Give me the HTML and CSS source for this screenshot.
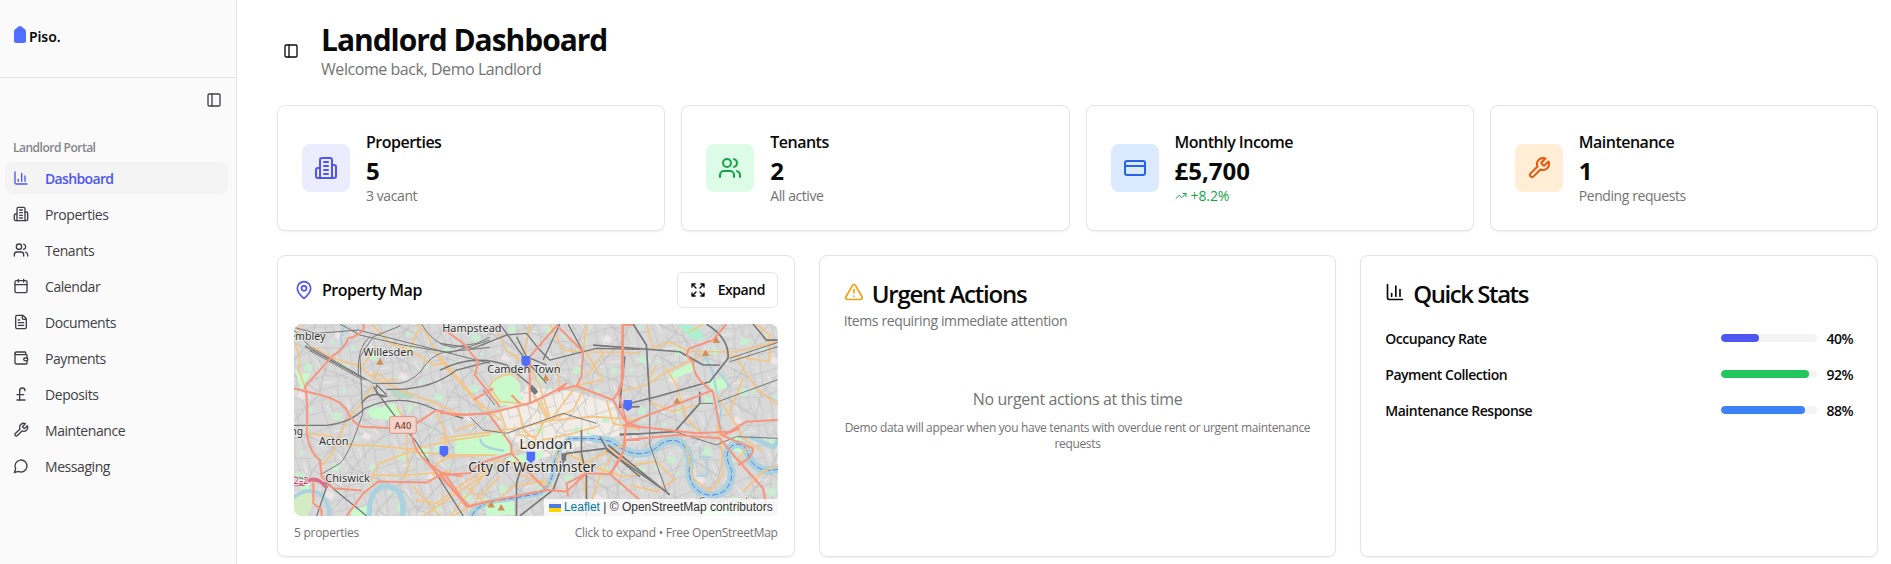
FILE: index.html
```html
<!DOCTYPE html>
<html lang="en">
<head>
<meta charset="utf-8">
<title>Landlord Dashboard</title>
<link rel="stylesheet" href="styles.css">
</head>
<body>
<svg class="sprite" aria-hidden="true">
  <symbol id="panel" viewBox="0 0 24 24"><rect width="18" height="18" x="3" y="3" rx="2"/><path d="M9 3v18"/></symbol>
  <symbol id="chart" viewBox="0 0 24 24"><path d="M3 3v16a2 2 0 0 0 2 2h16"/><path d="M18 17V9"/><path d="M13 17V5"/><path d="M8 17v-3"/></symbol>
  <symbol id="building" viewBox="0 0 24 24"><path d="M6 22V4a2 2 0 0 1 2-2h8a2 2 0 0 1 2 2v18Z"/><path d="M6 12H4a2 2 0 0 0-2 2v6a2 2 0 0 0 2 2h2"/><path d="M18 9h2a2 2 0 0 1 2 2v9a2 2 0 0 1-2 2h-2"/><path d="M10 6h4M10 10h4M10 14h4M10 18h4"/></symbol>
  <symbol id="users" viewBox="0 0 24 24"><path d="M16 21v-2a4 4 0 0 0-4-4H6a4 4 0 0 0-4 4v2"/><circle cx="9" cy="7" r="4"/><path d="M22 21v-2a4 4 0 0 0-3-3.87"/><path d="M16 3.13a4 4 0 0 1 0 7.75"/></symbol>
  <symbol id="calendar" viewBox="0 0 24 24"><path d="M8 2v4M16 2v4"/><rect width="18" height="18" x="3" y="4" rx="2"/><path d="M3 10h18"/></symbol>
  <symbol id="file" viewBox="0 0 24 24"><path d="M15 2H6a2 2 0 0 0-2 2v16a2 2 0 0 0 2 2h12a2 2 0 0 0 2-2V7Z"/><path d="M14 2v4a2 2 0 0 0 2 2h4"/><path d="M10 9H8M16 13H8M16 17H8"/></symbol>
  <symbol id="wallet" viewBox="0 0 24 24"><path d="M19 7V4a1 1 0 0 0-1-1H5a2 2 0 0 0 0 4h15a1 1 0 0 1 1 1v4h-3a2 2 0 0 0 0 4h3a1 1 0 0 0 1-1v-2a1 1 0 0 0-1-1"/><path d="M3 5v14a2 2 0 0 0 2 2h15a1 1 0 0 0 1-1v-4"/></symbol>
  <symbol id="pound" viewBox="0 0 24 24"><path d="M18 7c0-5.333-8-5.333-8 0"/><path d="M10 7v14"/><path d="M6 21h12"/><path d="M6 13h10"/></symbol>
  <symbol id="wrench" viewBox="0 0 24 24"><path d="M14.7 6.3a1 1 0 0 0 0 1.4l1.6 1.6a1 1 0 0 0 1.4 0l3.77-3.77a6 6 0 0 1-7.94 7.94l-6.91 6.91a2.12 2.12 0 0 1-3-3l6.91-6.91a6 6 0 0 1 7.94-7.94l-3.76 3.76z"/></symbol>
  <symbol id="message" viewBox="0 0 24 24"><path d="M7.9 20A9 9 0 1 0 4 16.1L2 22Z"/></symbol>
  <symbol id="card" viewBox="0 0 24 24"><rect width="20" height="14" x="2" y="5" rx="2"/><path d="M2 10h20"/></symbol>
  <symbol id="trend" viewBox="0 0 24 24"><path d="M22 7l-8.5 8.5-5-5L2 17"/><path d="M16 7h6v6"/></symbol>
  <symbol id="pin" viewBox="0 0 24 24"><path d="M20 10c0 4.993-5.539 10.193-7.399 11.799a1 1 0 0 1-1.202 0C9.539 20.193 4 14.993 4 10a8 8 0 0 1 16 0"/><circle cx="12" cy="10" r="3"/></symbol>
  <symbol id="expand" viewBox="0 0 24 24"><path d="m15 15 6 6M15 9l6-6M21 16.2V21h-4.8M21 7.8V3h-4.8M3 16.2V21h4.8M3 21l6-6M3 7.8V3h4.8M9 9 3 3"/></symbol>
  <symbol id="alert" viewBox="0 0 24 24"><path d="m21.73 18-8-14a2 2 0 0 0-3.48 0l-8 14A2 2 0 0 0 4 21h16a2 2 0 0 0 1.73-3"/><path d="M12 9v4M12 17h.01"/></symbol>
</svg>

<div class="app">
  <aside class="sidebar">
    <div class="brand">
      <svg class="brand-mark" viewBox="0 0 12 17"><path d="M0 5.6Q0 4.4.9 3.6L4.6.6Q6-.4 7.4.6L11.1 3.6Q12 4.4 12 5.6V14.5Q12 17 9.5 17H2.5Q0 17 0 14.5Z"/></svg>
      <span class="brand-name">Piso.</span>
    </div>
    <div class="collapse"><svg class="icon"><use href="#panel"/></svg></div>
    <div class="group-label">Landlord Portal</div>
    <nav class="nav">
      <a class="nav-item active"><svg class="icon"><use href="#chart"/></svg><span>Dashboard</span></a>
      <a class="nav-item"><svg class="icon"><use href="#building"/></svg><span>Properties</span></a>
      <a class="nav-item"><svg class="icon"><use href="#users"/></svg><span>Tenants</span></a>
      <a class="nav-item"><svg class="icon"><use href="#calendar"/></svg><span>Calendar</span></a>
      <a class="nav-item"><svg class="icon"><use href="#file"/></svg><span>Documents</span></a>
      <a class="nav-item"><svg class="icon"><use href="#wallet"/></svg><span>Payments</span></a>
      <a class="nav-item"><svg class="icon"><use href="#pound"/></svg><span>Deposits</span></a>
      <a class="nav-item"><svg class="icon"><use href="#wrench"/></svg><span>Maintenance</span></a>
      <a class="nav-item"><svg class="icon"><use href="#message"/></svg><span>Messaging</span></a>
    </nav>
  </aside>

  <main class="main">
    <header class="page-head">
      <svg class="icon"><use href="#panel"/></svg>
      <div>
        <h1 class="page-title">Landlord Dashboard</h1>
        <p class="page-sub">Welcome back, Demo Landlord</p>
      </div>
    </header>

    <section class="stats">
      <article class="card stat">
        <div class="tile indigo"><svg class="icon lg"><use href="#building"/></svg></div>
        <div><div class="stat-label">Properties</div><div class="stat-value">5</div><div class="stat-note">3 vacant</div></div>
      </article>
      <article class="card stat">
        <div class="tile green"><svg class="icon lg"><use href="#users"/></svg></div>
        <div><div class="stat-label">Tenants</div><div class="stat-value">2</div><div class="stat-note">All active</div></div>
      </article>
      <article class="card stat">
        <div class="tile blue"><svg class="icon lg"><use href="#card"/></svg></div>
        <div><div class="stat-label">Monthly Income</div><div class="stat-value">£5,700</div><div class="stat-note up"><svg class="icon xs"><use href="#trend"/></svg>+8.2%</div></div>
      </article>
      <article class="card stat">
        <div class="tile orange"><svg class="icon lg"><use href="#wrench"/></svg></div>
        <div><div class="stat-label">Maintenance</div><div class="stat-value">1</div><div class="stat-note">Pending requests</div></div>
      </article>
    </section>

    <section class="panels">
      <article class="card map-card">
        <div class="map-head">
          <svg class="icon md"><use href="#pin"/></svg>
          <h2 class="map-title">Property Map</h2>
          <button class="expand"><svg class="icon"><use href="#expand"/></svg><span>Expand</span></button>
        </div>
        <div class="map">
          <svg class="map-art" viewBox="0 0 1452 576">
            <defs>
              <pattern id="streets" width="170" height="150" patternUnits="userSpaceOnUse" patternTransform="rotate(-14)">
                <path d="M0 30L50 22 90 34 170 30M0 95L60 88 120 104 170 95M25 0L30 60 22 110 25 150M85 0L90 34 76 90 85 150M140 0L132 60 144 100 140 150M30 60L85 62M110 31V70L140 66M50 90V130L84 128M0 128L24 126M144 126L170 128M105 0V32M60 0L56 24M112 104V150" fill="none" stroke="#c3c3c3" stroke-width="2.2"/>
                <path d="M8 45L20 50M40 42L76 46M66 72V84M120 50H130M98 110L100 140M152 45L164 80M36 110L44 144M126 10V26" fill="none" stroke="#ececec" stroke-width="3"/>
                <path d="M94 76h10v10h-10zM8 70h9v8h-9zM150 108h12v10h-12z" fill="#c3f2d2"/>
              </pattern>
              <pattern id="lanes" width="230" height="210" patternUnits="userSpaceOnUse" patternTransform="rotate(32)">
                <path d="M0 50L90 42 150 66 230 50M60 0L66 44 50 130 60 210M160 0L150 66 176 140 160 210M52 130L172 132" fill="none" stroke="#b6b6b6" stroke-width="2"/>
                <path d="M90 80l22-6 6 20-20 8zM190 20l18 2-4 20-14-4zM10 160l26-6 4 18-22 8z" fill="#c8f0cf"/>
                <path d="M120 160l26 2-2 16-22 2z" fill="#f0e6ea"/>
              </pattern>
            </defs>
            <rect width="1452" height="576" fill="#d9d9d9"/>
            <path d="M600 280L700 190 830 200 960 240 990 330 850 370 720 410 650 340Z" fill="#f2ede6"/>
            <rect width="1452" height="576" fill="url(#streets)"/>
            <rect width="1452" height="576" fill="url(#lanes)"/>

            <g class="park">
              <path d="M220 262L300 238 325 262 296 290 232 282Z"/>
              <path d="M590 190Q590 150 650 152L678 178V238L620 246Q596 240 590 190Z"/>
              <path d="M485 340L640 325 652 385 590 398 482 388Z"/>
              <path d="M645 400L745 380 750 398 690 418 640 412Z"/>
              <path d="M0 516Q50 490 62 530L40 576H0Z" fill="#d3ecc4"/>
              <path d="M566 525L654 520 664 570 580 576Z"/>
              <path d="M1125 150L1190 118 1208 138 1130 168Z"/>
              <path d="M0 130L18 150 50 146 22 200Z"/>
              <path d="M1240 170L1296 160 1300 190 1260 205Z"/>
              <path d="M1150 0L1210 8 1236 40 1200 50Z" fill="#adf0d0"/>
              <path d="M286 198L330 200 372 212 350 224 300 220Z" fill="#b8d8c4"/>
              <path d="M1320 330L1350 350 1342 386 1310 378Z"/>
              <path d="M1228 560L1300 540 1310 576H1230Z"/>
              <path d="M20 470L48 480 44 500 18 496ZM170 560L220 545 240 576H172ZM372 370L408 376 400 402 370 398Z"/>
            </g>

            <g class="water">
              <path d="M0 520Q40 488 78 510 104 530 106 576" stroke-width="11"/>
              <path d="M226 576Q226 488 276 486 334 490 326 576" stroke-width="16"/>
              <path d="M534 576Q556 530 640 526L740 508Q776 480 780 430 784 380 826 344L900 344" stroke-width="16"/>
              <path d="M900 344L952 352Q1010 400 1060 386 1080 380 1104 358 1150 336 1174 370 1196 400 1186 440 1190 506 1250 514 1316 510 1314 440 1284 384 1320 362 1356 352 1366 400 1390 450 1452 436" stroke-width="24"/>
              <path d="M153 0L140 40 146 70 132 86M560 346Q560 368 606 376L628 380" stroke-width="7"/>
              <path d="M1230 90L1256 140 1268 200 1282 260 1276 300 1300 330M1272 140L1310 190M1218 370V400H1250M1210 455H1240V400" stroke-width="6"/>
              <path d="M1375 340L1440 370 1452 350" stroke-width="14"/>
            </g>
            <path class="ferry" d="M534 576Q556 530 640 526L740 508Q776 480 780 430 784 380 826 344L900 344 952 352Q1010 400 1060 386 1080 380 1104 358 1150 336 1174 370 1196 400 1186 440 1190 506 1250 514 1316 510 1314 440 1284 384 1320 362 1356 352 1366 400 1390 450 1452 436"/>

            <g class="minor">
              <g transform="translate(-12 -12)">
                <path d="M12 70Q34 100 26 150L45 200M30 12L20 60M68 80L110 105 150 122 205 136 246 170 330 210 440 250 520 290"/>
                <path d="M245 12L300 70 360 90 430 135 460 130M380 12L410 40 450 120 520 200 580 270M385 30L350 110"/>
                <path d="M215 140L260 80M240 170L262 158 290 182 320 178M250 195L215 250 170 300 150 350 120 410 90 440"/>
                <path d="M320 260L350 310V390M160 376H250L370 388 480 362 600 345M50 340L130 350M245 470L265 432 360 395 490 405H600M350 390L356 440 345 478M245 466H350L480 455M240 490L250 466"/>
                <path d="M375 540L440 550 520 490 600 440M400 588L500 520 590 460M370 500L450 588M430 470L440 430 495 405M440 280L465 330 468 390M490 588L560 548M500 330L560 310"/>
              </g>
              <g transform="translate(438 -12)">
                <path d="M0 110L60 180 110 240 180 300M270 12L255 90 262 130 230 180M170 30L200 90 270 140 300 200 330 290M150 200Q160 165 230 160M150 200L180 245 250 250"/>
                <path d="M330 12L370 90 420 95 600 98M430 95L440 12M440 100L490 180 410 196 340 290M490 100L440 170M350 130L360 200 345 215"/>
                <path d="M0 355L120 340 230 325 330 302 460 290 600 300M180 270L200 330M235 260L250 330 290 360M300 240L330 300 400 270 430 210M280 225L320 290 290 350 230 345"/>
                <path d="M215 400L310 360 400 340 470 320M0 410L170 405M30 588L170 420 300 440M170 545L220 500 320 480M230 460L340 500M380 400L460 440 550 470 600 465M420 400L440 540M520 400L480 470 440 588M410 440L560 370"/>
                <path d="M110 540L180 470M80 500L150 560M350 390V450M500 240L520 310 600 330"/>
              </g>
              <g transform="translate(708 -237)">
                <path d="M350 237L370 310 420 290 480 320M270 440L350 420 410 380 520 330M410 370L440 420 470 520 510 560M360 470L430 500 500 480M380 360L360 400"/>
                <path d="M480 260L520 237M480 320H620L744 290M590 330L720 350M680 237L720 270V350M560 450L620 540 640 580 700 620M640 400L600 500M620 340L680 430 744 480M470 600L490 700 540 740 580 690 575 600 560 540M430 700L380 650 300 660 240 610 200 640M300 720L380 740 440 700M640 740L700 680 744 660M620 650L660 600"/>
              </g>
            </g>

            <g class="rail">
              <g transform="translate(-12 -12)">
                <path d="M12 22L80 40 205 30M12 30L60 80 250 190H330Q380 180 410 130 440 95 480 95L600 82M60 92L220 180M205 30L600 130" class="thin"/>
                <path d="M150 12L210 45 340 75 480 98 600 60M395 12Q430 75 490 82L560 70 600 52M205 170Q200 80 240 50M330 18L250 50 210 110 218 280Q180 400 150 430L95 462" class="thin"/>
                <path d="M45 78L230 180M12 316H110Q180 310 225 265 330 215 440 270L520 295M250 200Q320 300 375 360L520 588M290 208H325Q430 205 500 150L600 125M12 470L110 490 230 588M110 500L80 588"/>
                <path d="M215 250Q240 210 290 230Q250 230 260 195L290 225"/>
              </g>
              <g transform="translate(438 -12)">
                <path d="M0 70L100 85 200 45 260 40 300 90 330 120 430 95M180 12L250 110 320 190M0 150Q100 100 200 135L290 210M360 12L310 120M385 12L430 95 470 85 600 88M230 50L260 110 320 135"/>
                <path d="M130 210L165 255M90 290L130 330 200 340 370 280 470 310" class="thin"/>
                <path d="M230 588V490L245 440M240 588L340 510 380 400 500 385 600 470M425 330V400L440 470V588M480 350L500 385M600 260L540 262 545 200 555 110M600 342H540" stroke-width="5"/>
                <path d="M272 200l18 20M372 400v22" stroke-width="14"/>
              </g>
              <g transform="translate(708 -237)">
                <path d="M310 237L350 300 360 470M190 300L450 320 520 360 570 360M530 237Q600 280 595 340L540 410 380 455 280 480M510 440V475L435 560 270 570M670 237L710 285H744M235 600L420 750M230 615L410 740" stroke-width="5"/>
                <path d="M510 475H550M600 340L744 292M600 350L744 305M565 470L744 404M360 470V600L410 740M435 560L560 600 620 575 744 580" class="thin"/>
              </g>
            </g>

            <g class="major">
              <g transform="translate(-12 -12)">
                <path d="M220 12Q230 40 175 55 160 90 130 105L45 200Q55 240 50 340 60 400 90 420L95 470M12 205L80 222Q160 240 175 280 190 310 215 320L300 324M380 310L440 270 490 285 600 280M70 480V550L95 570V588M170 588L220 520 265 485 410 488 460 460 520 470M365 340Q370 390 410 425L470 470 530 555M405 420L450 470 540 560 600 542M95 470L130 505 215 512"/>
              </g>
              <g transform="translate(438 -12)">
                <path d="M15 30L70 70 115 125 105 165 165 240 180 260M0 278L80 285 145 280 270 250 350 210 410 198 520 240 555 300 600 325M145 280L215 375V400L270 460 320 510M355 12L270 110V250M355 20L430 95 425 170 410 198M548 12L545 200 520 240M0 465L90 460 120 430 215 400M0 460L80 560 130 548 320 510 380 515 440 460 510 462Q560 400 555 360H600M350 210L380 190 355 215M440 460L380 490 385 530M510 462L600 540M240 250L215 225M100 240L160 205"/>
              </g>
              <g transform="translate(708 -237)">
                <path d="M280 237V400L265 440 290 530 280 620 240 690M280 240H310M590 237L550 285 480 310Q460 330 490 350 490 400 550 440L575 570 670 610Q670 640 625 660M290 540L330 520 500 455 550 435M280 540L500 565 600 560 650 530 744 525M290 585L440 570 570 580 620 640 700 730 710 780M580 570L630 550"/>
              </g>
            </g>
            <path d="M0 480L28 482Q54 456 78 472L100 492" fill="none" stroke="#e06b8c" stroke-width="10"/>
            <path class="peak" d="M247 122L258 102 269 122ZM745 170L756 150 767 170ZM581 551L592 531 603 551ZM611 560L622 540 633 560ZM1139 239L1150 219 1161 239ZM1225 96L1236 76 1247 96ZM1257 57L1268 37 1279 57Z"/>
            <g class="place">
              <text x="-44" y="48" textLength="138" lengthAdjust="spacingAndGlyphs">Wembley</text>
              <text x="208" y="95" textLength="150" lengthAdjust="spacingAndGlyphs">Willesden</text>
              <text x="445" y="24" textLength="178" lengthAdjust="spacingAndGlyphs">Hampstead</text>
              <text x="580" y="146" textLength="220" lengthAdjust="spacingAndGlyphs">Camden Town</text>
              <text x="75" y="363" textLength="89" lengthAdjust="spacingAndGlyphs">Acton</text>
              <text x="-60" y="334" textLength="87" lengthAdjust="spacingAndGlyphs">Ealing</text>
              <text x="94" y="475" textLength="134" lengthAdjust="spacingAndGlyphs">Chiswick</text>
              <text x="1214" y="544" textLength="160" lengthAdjust="spacingAndGlyphs" fill-opacity=".7">Greenwich</text>
              <text class="city" x="676" y="374" textLength="160" lengthAdjust="spacingAndGlyphs">London</text>
              <text class="borough" x="523" y="444" textLength="384" lengthAdjust="spacingAndGlyphs">City of Westminster</text>
            </g>
            <text class="junction" x="-1" y="480">2–2</text>
            <rect x="287" y="278" width="80" height="50" rx="5" fill="#f3d3ca" stroke="#d99788" stroke-width="3"/>
            <text class="shield" x="327" y="314">A40</text>
            <g fill="#4f6dff">
              <path id="marker" d="M683 99q0-3 3-3h20q3 0 3 3v21l-13 10-13-10z"/>
              <use href="#marker" x="-246" y="270"/>
              <use href="#marker" x="15" y="287"/>
              <use href="#marker" x="306" y="132"/>
            </g>
          </svg>
          <div class="attribution">
            <svg class="flag" viewBox="0 0 12 8"><path fill="#4c7be1" d="M0 0h12v4H0z"/><path fill="#ffd500" d="M0 4h12v4H0z"/></svg>
            <span><a>Leaflet</a> | © OpenStreetMap contributors</span>
          </div>
        </div>
        <div class="map-foot"><span>5 properties</span><span>Click to expand • Free OpenStreetMap</span></div>
      </article>

      <article class="card panel">
        <h2 class="panel-title"><svg class="icon md amber"><use href="#alert"/></svg><span>Urgent Actions</span></h2>
        <p class="panel-sub">Items requiring immediate attention</p>
        <div class="empty">
          <p class="empty-title">No urgent actions at this time</p>
          <p class="empty-note">Demo data will appear when you have tenants with overdue rent or urgent maintenance requests</p>
        </div>
      </article>

      <article class="card panel">
        <h2 class="panel-title"><svg class="icon md"><use href="#chart"/></svg><span class="tight">Quick Stats</span></h2>
        <div class="meters">
          <div class="meter"><span class="meter-label">Occupancy Rate</span><div class="track"><div class="fill indigo-fill" style="width:40%"></div></div><span class="meter-value">40%</span></div>
          <div class="meter"><span class="meter-label">Payment Collection</span><div class="track"><div class="fill green-fill" style="width:92%"></div></div><span class="meter-value">92%</span></div>
          <div class="meter"><span class="meter-label">Maintenance Response</span><div class="track"><div class="fill blue-fill" style="width:88%"></div></div><span class="meter-value">88%</span></div>
        </div>
      </article>
    </section>
  </main>
</div>
</body>
</html>
```
FILE: styles.css
```css
* { box-sizing: border-box; }
body { margin: 0; background: #fff; color: #0a0a0a; font-family: "Open Sans", "Noto Sans", sans-serif; font-size: 16px; line-height: 24px; overflow: hidden; }
h1, h2, p { margin: 0; }
.sprite { position: absolute; width: 0; height: 0; }
.icon { width: 16px; height: 16px; flex: none; fill: none; stroke: currentColor; stroke-width: 2; stroke-linecap: round; stroke-linejoin: round; }
.icon.xs { width: 12px; height: 12px; }
.icon.md { width: 20px; height: 20px; }
.icon.lg { width: 24px; height: 24px; }

.app { display: flex; height: 564px; }
.sidebar { width: 237px; flex: none; background: #fafafa; border-right: 1px solid #e5e5e5; color: #3f3f46; }
.brand { height: 78px; border-bottom: 1px solid #e5e5e5; display: flex; align-items: flex-start; gap: 3px; padding: 26px 14px 0; }
.brand-mark { width: 12px; height: 17px; fill: #4f6dff; }
.brand-name { font-family: "Noto Sans", sans-serif; font-weight: 600; font-size: 14px; line-height: 21px; color: #0a0a0a; letter-spacing: -.1px; }
.collapse { display: flex; justify-content: flex-end; padding: 14px 14px 0 0; height: 53px; }
.group-label { height: 31px; padding-left: 13px; line-height: 33px; font-size: 12px; font-weight: 600; color: #85858a; letter-spacing: -.5px; }
.nav { display: flex; flex-direction: column; gap: 4px; padding: 0 8px 0 5px; }
.nav-item { display: flex; align-items: center; gap: 16px; height: 32px; padding: 0 8px; border-radius: 8px; font-size: 14px; line-height: 20px; letter-spacing: -.43px; }
.nav-item span { padding-top: 1px; }
.nav-item.active { background: #f4f4f5; color: #4f55f1; font-weight: 600; letter-spacing: -.65px; }

.main { flex: 1; padding: 22px 13px 0 40px; }
.page-head { display: flex; align-items: center; gap: 22px; height: 58px; padding-left: 6px; margin-bottom: 25px; }
.page-title { font-size: 30px; line-height: 36px; font-weight: 700; letter-spacing: -1.05px; }
.page-sub { color: #737373; line-height: 22px; letter-spacing: -.44px; }

.card { background: #fff; border: 1px solid #e5e5e5; border-radius: 8px; box-shadow: 0 1px 2px rgba(0, 0, 0, .06); }
.stats { display: grid; grid-template-columns: repeat(4, 1fr); gap: 16px; margin-bottom: 24px; }
.stat { display: flex; align-items: center; gap: 16px; padding: 24px; height: 126px; }
.tile { width: 48px; height: 48px; border-radius: 8px; display: grid; place-items: center; }
.indigo { background: #ebedfe; color: #4f55f1; }
.green { background: #dcfce7; color: #16a34a; }
.blue { background: #dbeafe; color: #2563eb; }
.orange { background: #ffedd5; color: #ea580c; }
.stat-label { height: 24px; line-height: 25px; font-weight: 600; letter-spacing: -.5px; }
.stat-value { height: 32px; font-size: 24px; line-height: 34px; font-weight: 700; letter-spacing: 0; }
.stat-note { display: flex; align-items: center; gap: 4px; font-size: 14px; line-height: 20px; color: #737373; letter-spacing: -.42px; }
.up { color: #16a34a; letter-spacing: -.1px; }

.panels { display: grid; grid-template-columns: repeat(3, 1fr); grid-template-rows: 302px; gap: 24px; }
.map-card { padding: 16px; }
.map-head { display: flex; align-items: center; gap: 8px; height: 36px; margin-bottom: 16px; }
.map-head > .icon { color: #4f55f1; }
.map-title { flex: 1; font-size: 16px; font-weight: 600; letter-spacing: -.48px; }
.expand { display: flex; align-items: center; gap: 12px; width: 101px; height: 36px; padding: 0 0 0 12px; background: #fff; border: 1px solid #e5e5e5; border-radius: 6px; font: 600 14px/20px "Open Sans", sans-serif; letter-spacing: -.45px; color: #0a0a0a; }
.map { position: relative; height: 192px; border-radius: 8px; overflow: hidden; }
.map-art { display: block; width: 100%; height: 100%; }
.park { fill: #c8facc; }
.water { fill: none; stroke: #aad3df; stroke-linecap: round; stroke-linejoin: round; }
.ferry { fill: none; stroke: #5b7cf0; stroke-width: 3; stroke-dasharray: 18 7; }
.minor { fill: none; stroke: #f6c581; stroke-width: 5; stroke-linejoin: round; }
.rail { fill: none; stroke: #777; stroke-width: 4; stroke-linejoin: round; }
.rail .thin { stroke-width: 3; }
.major { fill: none; stroke: #f8957c; stroke-width: 6; stroke-linejoin: round; }
.peak { fill: #d08f55; }
.place { font-family: "Noto Sans", sans-serif; font-size: 33px; fill: #2f2f2f; paint-order: stroke; stroke: rgba(255, 255, 255, .65); stroke-width: 5; }
.city { font-size: 45px; }
.borough { font-size: 41px; }
.junction { font: 27px "Noto Sans", sans-serif; fill: #b01c4a; paint-order: stroke; stroke: #fff; stroke-width: 4; }
.shield { font: 28px "Noto Sans", sans-serif; fill: #6b1d10; text-anchor: middle; }
.attribution { position: absolute; right: 0; bottom: 0; display: flex; align-items: center; gap: 3px; height: 17px; padding: 0 5px; background: rgba(255, 255, 255, .8); color: #333; font: 12px/17px "Liberation Sans", Arial, sans-serif; }
.attribution a { color: #0078a8; }
.flag { width: 12px; height: 8px; }
.map-foot { display: flex; justify-content: space-between; height: 16px; margin-top: 8px; font-size: 12px; line-height: 18px; color: #737373; letter-spacing: -.27px; }

.panel { padding: 24px; }
.panel-title { display: flex; align-items: flex-start; gap: 8px; height: 28px; font-size: 24px; line-height: 28px; font-weight: 600; letter-spacing: -1.22px; }
.tight { letter-spacing: -1.45px; }
.panel-title .icon { margin-top: 2px; }
.amber { color: #f59e0b; }
.panel-sub { margin-top: 3px; font-size: 14px; line-height: 20px; color: #737373; letter-spacing: -.38px; }
.empty { margin-top: 56px; text-align: center; color: #737373; }
.empty-title { letter-spacing: -.37px; }
.empty-note { margin-top: 9px; font-size: 12px; line-height: 16px; letter-spacing: -.34px; }
.meters { display: flex; flex-direction: column; gap: 16px; margin-top: 20px; }
.meter { display: flex; align-items: center; height: 20px; font-size: 14px; line-height: 20px; font-weight: 600; letter-spacing: -.5px; }
.meter-label { flex: 1; padding-top: 1px; }
.track { width: 96px; height: 8px; border-radius: 4px; background: #f4f4f5; overflow: hidden; }
.fill { height: 100%; border-radius: 4px; }
.indigo-fill { background: #4f55f1; }
.green-fill { background: #22c55e; }
.blue-fill { background: #3b82f6; }
.meter-value { width: 36px; padding-top: 1px; text-align: right; letter-spacing: -.5px; }
```
